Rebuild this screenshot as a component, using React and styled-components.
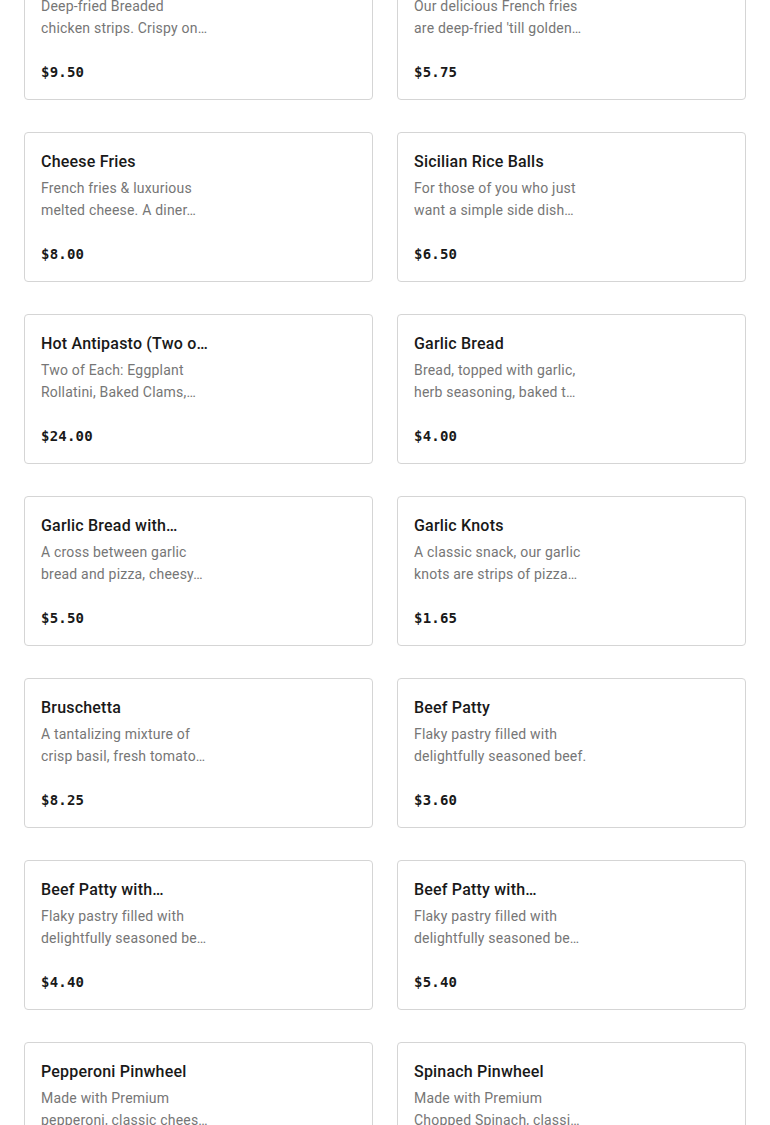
import React from 'react';
import styled, { createGlobalStyle } from 'styled-components';

const GlobalStyle = createGlobalStyle`
  html, body {
    margin: 0;
    padding: 0;
    background: #ffffff;
    overflow: hidden;
  }
  body {
    font-family: Roboto, "Noto Sans", "Liberation Sans", sans-serif;
    color: #191919;
  }
`;

const Page = styled.main`
  height: 1125px;
  overflow: hidden;
`;

// page is scrolled, so the first row starts above the viewport
const MenuGrid = styled.section`
  display: grid;
  grid-template-columns: 1fr 1fr;
  column-gap: 24px;
  row-gap: 32px;
  padding: 0 24px;
  margin-top: -50px;
`;

const ItemCard = styled.article`
  height: 150px;
  box-sizing: border-box;
  border: 1px solid #d5d5d5;
  border-radius: 4px;
  padding: 16px;
  display: flex;
  flex-direction: column;
`;

const ItemTitle = styled.h3`
  margin: 1px 0 0;
  height: 24px;
  font-size: 16px;
  line-height: 24px;
  font-weight: 500;
  letter-spacing: 0.2px;
  white-space: nowrap;
`;

const ItemDesc = styled.p`
  margin: 3px 0 0;
  height: 44px;
  font-size: 14px;
  line-height: 22px;
  letter-spacing: 0.2px;
  color: #767676;
  white-space: pre-line;
`;

const ItemPrice = styled.span`
  margin-top: 22px;
  font-family: "DejaVu Sans Mono", "Liberation Mono", monospace;
  font-size: 14px;
  line-height: 22px;
  font-weight: 700;
  letter-spacing: 0.2px;
`;

// descriptions are already clamped to two lines, as the menu shows them
const items = [
  { title: 'Chicken Fingers', desc: 'Deep-fried Breaded\nchicken strips. Crispy on…', price: '$9.50' },
  { title: 'French Fries', desc: "Our delicious French fries\nare deep-fried 'till golden…", price: '$5.75' },
  { title: 'Cheese Fries', desc: 'French fries & luxurious\nmelted cheese. A diner…', price: '$8.00' },
  { title: 'Sicilian Rice Balls', desc: 'For those of you who just\nwant a simple side dish…', price: '$6.50' },
  { title: 'Hot Antipasto (Two o…', desc: 'Two of Each: Eggplant\nRollatini, Baked Clams,…', price: '$24.00' },
  { title: 'Garlic Bread', desc: 'Bread, topped with garlic,\nherb seasoning, baked t…', price: '$4.00' },
  { title: 'Garlic Bread with…', desc: 'A cross between garlic\nbread and pizza, cheesy…', price: '$5.50' },
  { title: 'Garlic Knots', desc: 'A classic snack, our garlic\nknots are strips of pizza…', price: '$1.65' },
  { title: 'Bruschetta', desc: 'A tantalizing mixture of\ncrisp basil, fresh tomato…', price: '$8.25' },
  { title: 'Beef Patty', desc: 'Flaky pastry filled with\ndelightfully seasoned beef.', price: '$3.60' },
  { title: 'Beef Patty with…', desc: 'Flaky pastry filled with\ndelightfully seasoned be…', price: '$4.40' },
  { title: 'Beef Patty with…', desc: 'Flaky pastry filled with\ndelightfully seasoned be…', price: '$5.40' },
  { title: 'Pepperoni Pinwheel', desc: 'Made with Premium\npepperoni, classic chees…', price: '$4.00' },
  { title: 'Spinach Pinwheel', desc: 'Made with Premium\nChopped Spinach, classi…', price: '$4.00' },
];

export default function App() {
  return (
    <Page>
      <GlobalStyle />
      <MenuGrid>
        {items.map((item, i) => (
          <ItemCard key={i}>
            <ItemTitle>{item.title}</ItemTitle>
            <ItemDesc>{item.desc}</ItemDesc>
            <ItemPrice>{item.price}</ItemPrice>
          </ItemCard>
        ))}
      </MenuGrid>
    </Page>
  );
}
